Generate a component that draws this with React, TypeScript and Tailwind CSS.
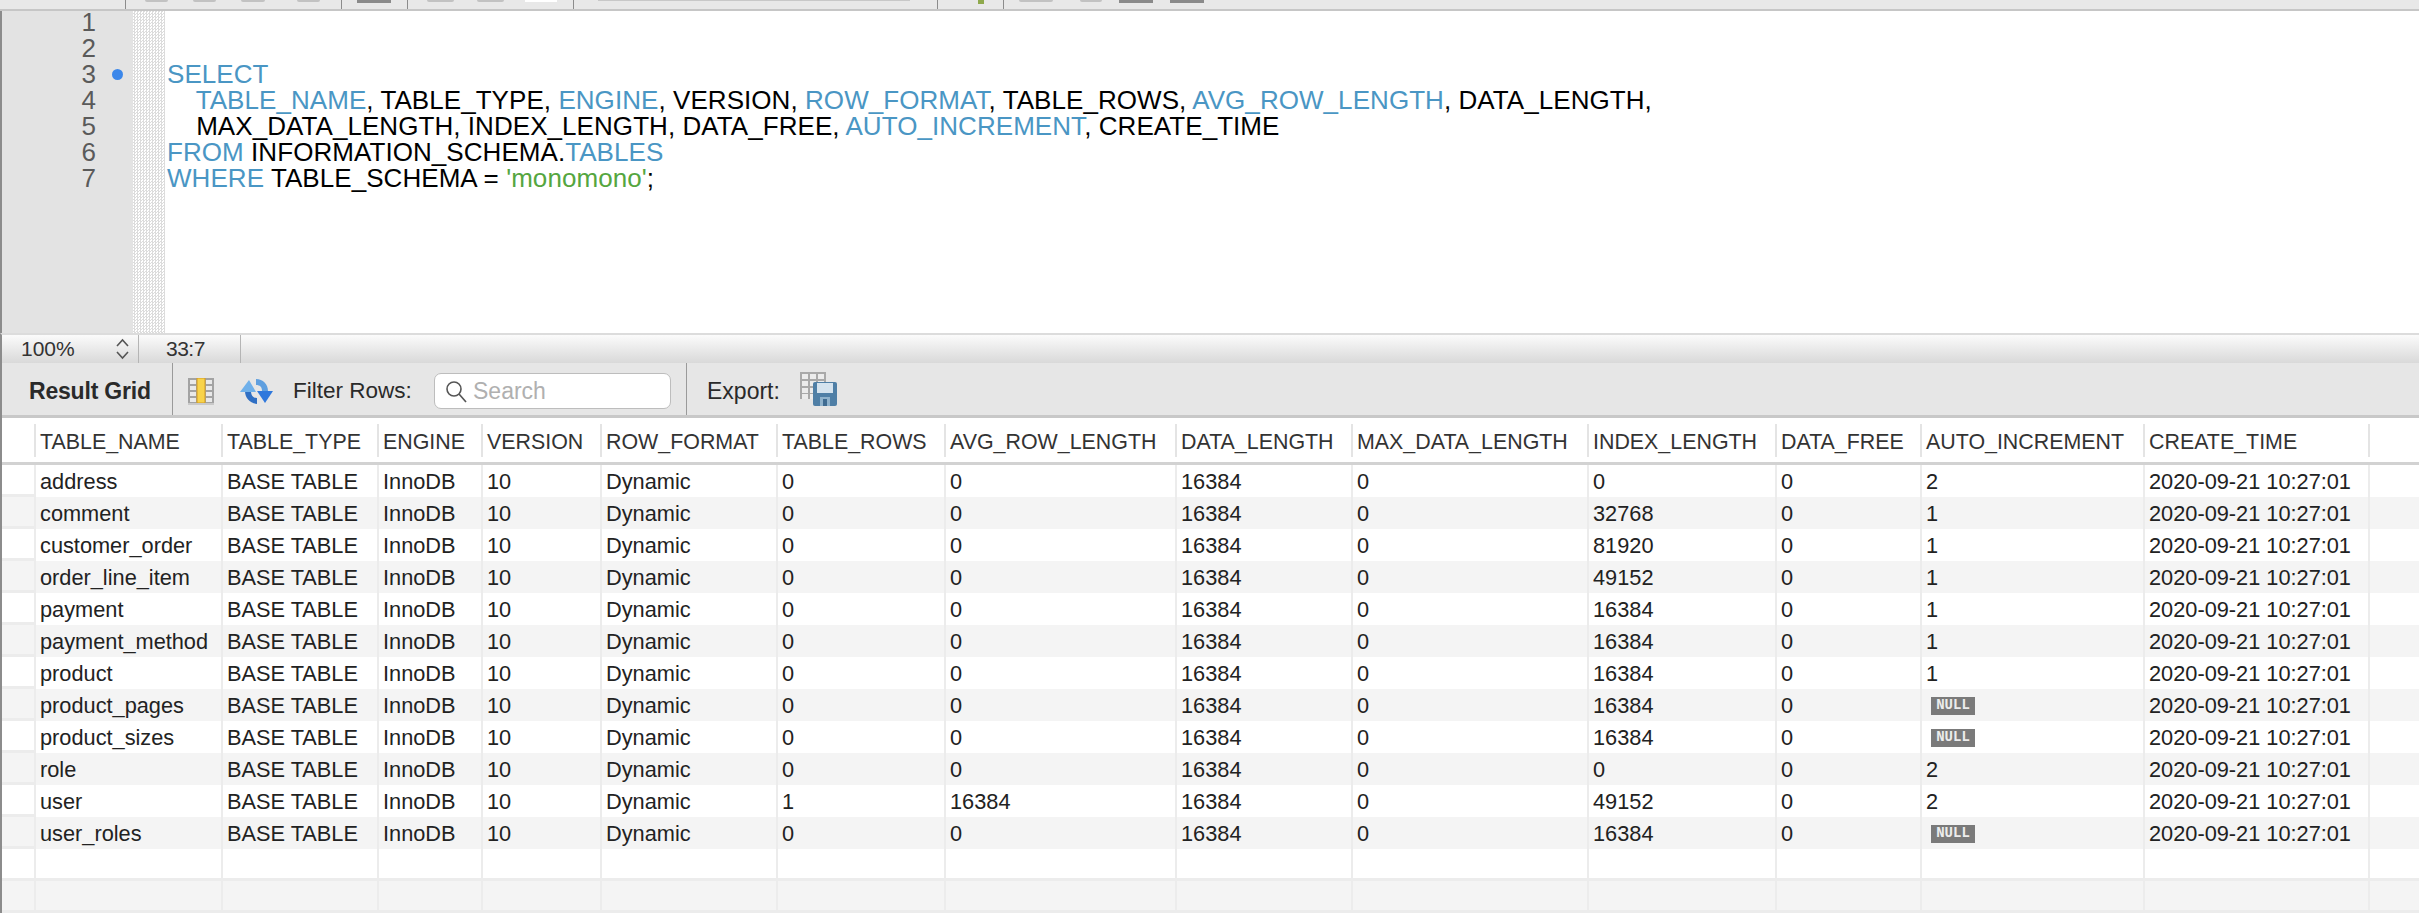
const gridCols = "grid grid-cols-[32px_187px_156px_104px_119px_176px_168px_231px_176px_236px_188px_145px_223px_225px_1fr]";

const columns = [
  "TABLE_NAME", "TABLE_TYPE", "ENGINE", "VERSION", "ROW_FORMAT", "TABLE_ROWS", "AVG_ROW_LENGTH",
  "DATA_LENGTH", "MAX_DATA_LENGTH", "INDEX_LENGTH", "DATA_FREE", "AUTO_INCREMENT", "CREATE_TIME",
];

// name, rows, avg row length, index length, auto increment
const tables: [string, string, string, string, string | null][] = [
  ["address", "0", "0", "0", "2"],
  ["comment", "0", "0", "32768", "1"],
  ["customer_order", "0", "0", "81920", "1"],
  ["order_line_item", "0", "0", "49152", "1"],
  ["payment", "0", "0", "16384", "1"],
  ["payment_method", "0", "0", "16384", "1"],
  ["product", "0", "0", "16384", "1"],
  ["product_pages", "0", "0", "16384", null],
  ["product_sizes", "0", "0", "16384", null],
  ["role", "0", "0", "0", "2"],
  ["user", "1", "16384", "49152", "2"],
  ["user_roles", "0", "0", "16384", null],
];

function Sep() {
  return <div className="w-px h-full bg-[#8c8c8c] shrink-0" />;
}

function TopToolbar() {
  const gray = "h-[2px] rounded-b-full bg-[#c2c2c2] shrink-0";
  const dark = "h-[3px] bg-[#8a8a8a] shrink-0";
  return (
    <div className="flex h-[11px] pl-[125px] bg-[#e8e8e8] border-b-2 border-[#c6c6c6] overflow-hidden">
      <Sep />
      <div className={`${gray} ml-[19px] w-[23px]`} />
      <div className={`${gray} ml-[25px] w-[23px]`} />
      <div className={`${gray} ml-[25px] w-[24px]`} />
      <div className={`${gray} ml-[32px] w-[23px]`} />
      <div className="ml-[21px] h-full"><Sep /></div>
      <div className={`${dark} ml-[15px] w-[34px]`} />
      <div className="ml-[16px] h-full"><Sep /></div>
      <div className={`${gray} ml-[19px] w-[27px]`} />
      <div className={`${gray} ml-[23px] w-[27px]`} />
      <div className="ml-[21px] w-[32px] h-[2px] bg-white shrink-0" />
      <div className="ml-[16px] h-full"><Sep /></div>
      <div className="ml-[24px] w-[312px] h-px bg-[#c8c8c8] shrink-0" />
      <div className="ml-[27px] h-full"><Sep /></div>
      <div className="ml-[40px] w-[6px] h-[4px] bg-[#8fa94c] shrink-0" />
      <div className="ml-[19px] h-full"><Sep /></div>
      <div className={`${gray} ml-[15px] w-[34px]`} />
      <div className={`${gray} ml-[27px] w-[22px]`} />
      <div className={`${dark} ml-[17px] w-[34px]`} />
      <div className={`${dark} ml-[17px] w-[34px]`} />
    </div>
  );
}

const Kw = ({ children }: { children: string }) => <span className="text-[#4a96c4]">{children}</span>;

function Editor() {
  return (
    <div className="flex h-[322px] bg-white border-l-2 border-[#8c8c8c] text-[26px]">
      <div className="w-[131px] shrink-0 bg-[#e3e3e3] text-[#5a5a5a]">
        <div className="-mt-[2px]">
          {[1, 2, 3, 4, 5, 6, 7].map((n) => (
            <div key={n} className="flex items-center h-[26px]">
              <span className="w-[94px] text-right">{n}</span>
              {n === 3 && <span className="ml-[16px] w-[11px] h-[11px] rounded-full bg-[#3b87ea]" />}
            </div>
          ))}
        </div>
      </div>
      <div className="w-[32px] shrink-0 bg-[repeating-conic-gradient(#dcdcdc_0_25%,#ffffff_0_50%)] bg-[length:3px_3px]" />
      <div className="-mt-[2px] pl-[2px] text-black whitespace-pre leading-[26px] tracking-[0.06px]">
        <div className="h-[26px]" />
        <div className="h-[26px]" />
        <div><Kw>SELECT</Kw></div>
        <div>    <Kw>TABLE_NAME</Kw>, TABLE_TYPE, <Kw>ENGINE</Kw>, VERSION, <Kw>ROW_FORMAT</Kw>, TABLE_ROWS, <Kw>AVG_ROW_LENGTH</Kw>, DATA_LENGTH,</div>
        <div>    MAX_DATA_LENGTH, INDEX_LENGTH, DATA_FREE, <Kw>AUTO_INCREMENT</Kw>, CREATE_TIME</div>
        <div><Kw>FROM</Kw> INFORMATION_SCHEMA.<Kw>TABLES</Kw></div>
        <div><Kw>WHERE</Kw> TABLE_SCHEMA = <span className="text-[#55a640]">'monomono'</span>;</div>
      </div>
    </div>
  );
}

function StatusBar() {
  return (
    <div className="flex items-center h-[30px] border-t-2 border-l-2 border-t-[#dcdcdc] border-l-[#8c8c8c] bg-gradient-to-b from-[#fbfbfb] to-[#d9d9d9] text-[21px] text-[#333]">
      <span className="ml-[19px] w-[94px]">100%</span>
      <svg width="15" height="24" viewBox="0 0 15 24" fill="none" stroke="#555" strokeWidth="1.6">
        <path d="M2 9 L7.5 3 L13 9" />
        <path d="M2 15 L7.5 21 L13 15" />
      </svg>
      <div className="ml-[8px] w-px h-full bg-[#b5b5b5]" />
      <span className="ml-[27px] w-[74px] tracking-[-0.5px]">33:7</span>
      <div className="w-px h-full bg-[#b5b5b5]" />
    </div>
  );
}

function ColumnsIcon() {
  return (
    <svg width="26" height="27" viewBox="0 0 26 27">
      <rect x="0" y="0" width="26" height="27" fill="#a3a3a3" />
      {[2, 8, 14, 20].map((y) => (
        <g key={y} fill="#e9e9e9">
          <rect x="2" y={y} width="6" height="4" />
          <rect x="18" y={y} width="6" height="4" />
        </g>
      ))}
      <rect x="9" y="0" width="8" height="25" fill="#f8d34a" stroke="#d29a22" />
      <rect x="0" y="25" width="26" height="2" fill="#c9c9c9" />
    </svg>
  );
}

function RefreshIcon() {
  return (
    <svg width="33" height="27" viewBox="0 0 33 27">
      <path d="M16 1 C23 1 28 6 28 13 L22 13 C22 9 20 7 16 7 Z" fill="#5f9fdf" />
      <path d="M33 13 L25 25 L17 13 Z" fill="#2f78dc" />
      <path d="M5 13 C5 20 10 25 17 26 L17 20 C13 20 11 17 11 13 Z" fill="#2f6fc4" />
      <path d="M0 14 L9 2 L16 14 Z" fill="#6fb0ea" />
    </svg>
  );
}

function ExportIcon() {
  return (
    <svg width="37" height="34" viewBox="0 0 37 34">
      <rect x="0" y="0" width="26" height="27" fill="#a9a9a9" />
      {[2, 9, 16, 22].map((y) => (
        <g key={y} fill="#ececec">
          <rect x="2" y={y} width="6" height="5" />
          <rect x="10" y={y} width="6" height="5" />
          <rect x="18" y={y} width="6" height="5" />
        </g>
      ))}
      <rect x="13" y="10" width="24" height="24" rx="2" fill="#4f7fa6" />
      <rect x="17" y="11" width="16" height="10" fill="#d5e3ee" />
      <rect x="20" y="25" width="10" height="9" fill="#8fb2cc" />
      <rect x="23" y="27" width="4" height="7" fill="#3f6c92" />
    </svg>
  );
}

function ResultToolbar() {
  return (
    <div className="flex items-center h-[52px] pt-[4px] bg-[#e6e6e6] border-l-2 border-[#8c8c8c] text-[23px] text-[#2a2a2a]">
      <span className="ml-[27px] w-[143px] font-bold tracking-[-0.2px]">Result Grid</span>
      <div className="w-px h-[52px] -mt-[4px] bg-[#9a9a9a]" />
      <div className="ml-[15px] flex"><ColumnsIcon /></div>
      <div className="ml-[26px] flex"><RefreshIcon /></div>
      <span className="ml-[20px] w-[141px] text-[22.5px]">Filter Rows:</span>
      <div className="flex items-center w-[237px] h-[36px] rounded-[7px] bg-white border border-[#bdbdbd]">
        <svg className="ml-[10px]" width="23" height="24" viewBox="0 0 23 24" fill="none" stroke="#555" strokeWidth="1.6">
          <circle cx="9" cy="10" r="7" />
          <path d="M14 15 L21 23" />
        </svg>
        <span className="ml-[5px] text-[#b0b0b0]">Search</span>
      </div>
      <div className="ml-[15px] w-px h-[52px] -mt-[4px] bg-[#9a9a9a]" />
      <span className="ml-[20px] w-[93px]">Export:</span>
      <div className="flex -mt-[4px]"><ExportIcon /></div>
    </div>
  );
}

function NullBadge() {
  return (
    <span className="inline-flex items-center justify-center ml-[5px] -mt-[1px] w-[44px] h-[18px] bg-[#7a7a7a] text-[#ececec] text-[14px] font-bold font-['Liberation_Mono',monospace]">
      NULL
    </span>
  );
}

function Cell({ children, shaded }: { children?: React.ReactNode; shaded?: boolean }) {
  return (
    <div className={`flex items-center min-w-0 pl-[4px] pt-[1px] border-l-2 border-[#ececec] whitespace-nowrap ${shaded ? "bg-[#f4f4f4]" : "bg-white"}`}>
      {children}
    </div>
  );
}

function ResultGrid() {
  return (
    <div className="border-l-2 border-[#8c8c8c] bg-white text-[21.75px] text-[#222]">
      <div className={`${gridCols} h-[50px] items-center border-t-[3px] border-b-[3px] border-t-[#c8c8c8] border-b-[#d2d2d2] text-[#333] text-[21.4px]`}>
        <div />
        {columns.map((c) => (
          <div key={c} className="flex items-center h-[33px] pl-[4px] pt-[4px] border-l-2 border-[#e4e4e4] whitespace-nowrap">{c}</div>
        ))}
        <div className="h-[33px] border-l-2 border-[#e4e4e4]" />
      </div>
      {tables.map(([name, rows, avg, index, auto], i) => {
        const shaded = i % 2 === 1;
        return (
          <div key={name} className={`${gridCols} h-[32px] border-b-[3px] border-[#ececec] ${shaded ? "bg-[#f4f4f4]" : "bg-white"}`}>
            <div />
            <Cell shaded={shaded}>{name}</Cell>
            <Cell shaded={shaded}>BASE TABLE</Cell>
            <Cell shaded={shaded}>InnoDB</Cell>
            <Cell shaded={shaded}>10</Cell>
            <Cell shaded={shaded}>Dynamic</Cell>
            <Cell shaded={shaded}>{rows}</Cell>
            <Cell shaded={shaded}>{avg}</Cell>
            <Cell shaded={shaded}>16384</Cell>
            <Cell shaded={shaded}>0</Cell>
            <Cell shaded={shaded}>{index}</Cell>
            <Cell shaded={shaded}>0</Cell>
            <Cell shaded={shaded}>{auto === null ? <NullBadge /> : auto}</Cell>
            <Cell shaded={shaded}>2020-09-21 10:27:01</Cell>
            <Cell shaded={shaded} />
          </div>
        );
      })}
      {[false, true].map((shaded) => (
        <div key={String(shaded)} className={`${gridCols} h-[32px] border-b-[3px] border-[#ececec] ${shaded ? "bg-[#f4f4f4]" : "bg-white"}`}>
          <div />
          {[...columns, ""].map((c) => <Cell key={c} shaded={shaded} />)}
        </div>
      ))}
    </div>
  );
}

export default function App() {
  return (
    <div className="h-[913px] w-[2419px] overflow-hidden bg-white font-['Liberation_Sans',Arial,sans-serif]">
      <TopToolbar />
      <Editor />
      <StatusBar />
      <ResultToolbar />
      <ResultGrid />
    </div>
  );
}
